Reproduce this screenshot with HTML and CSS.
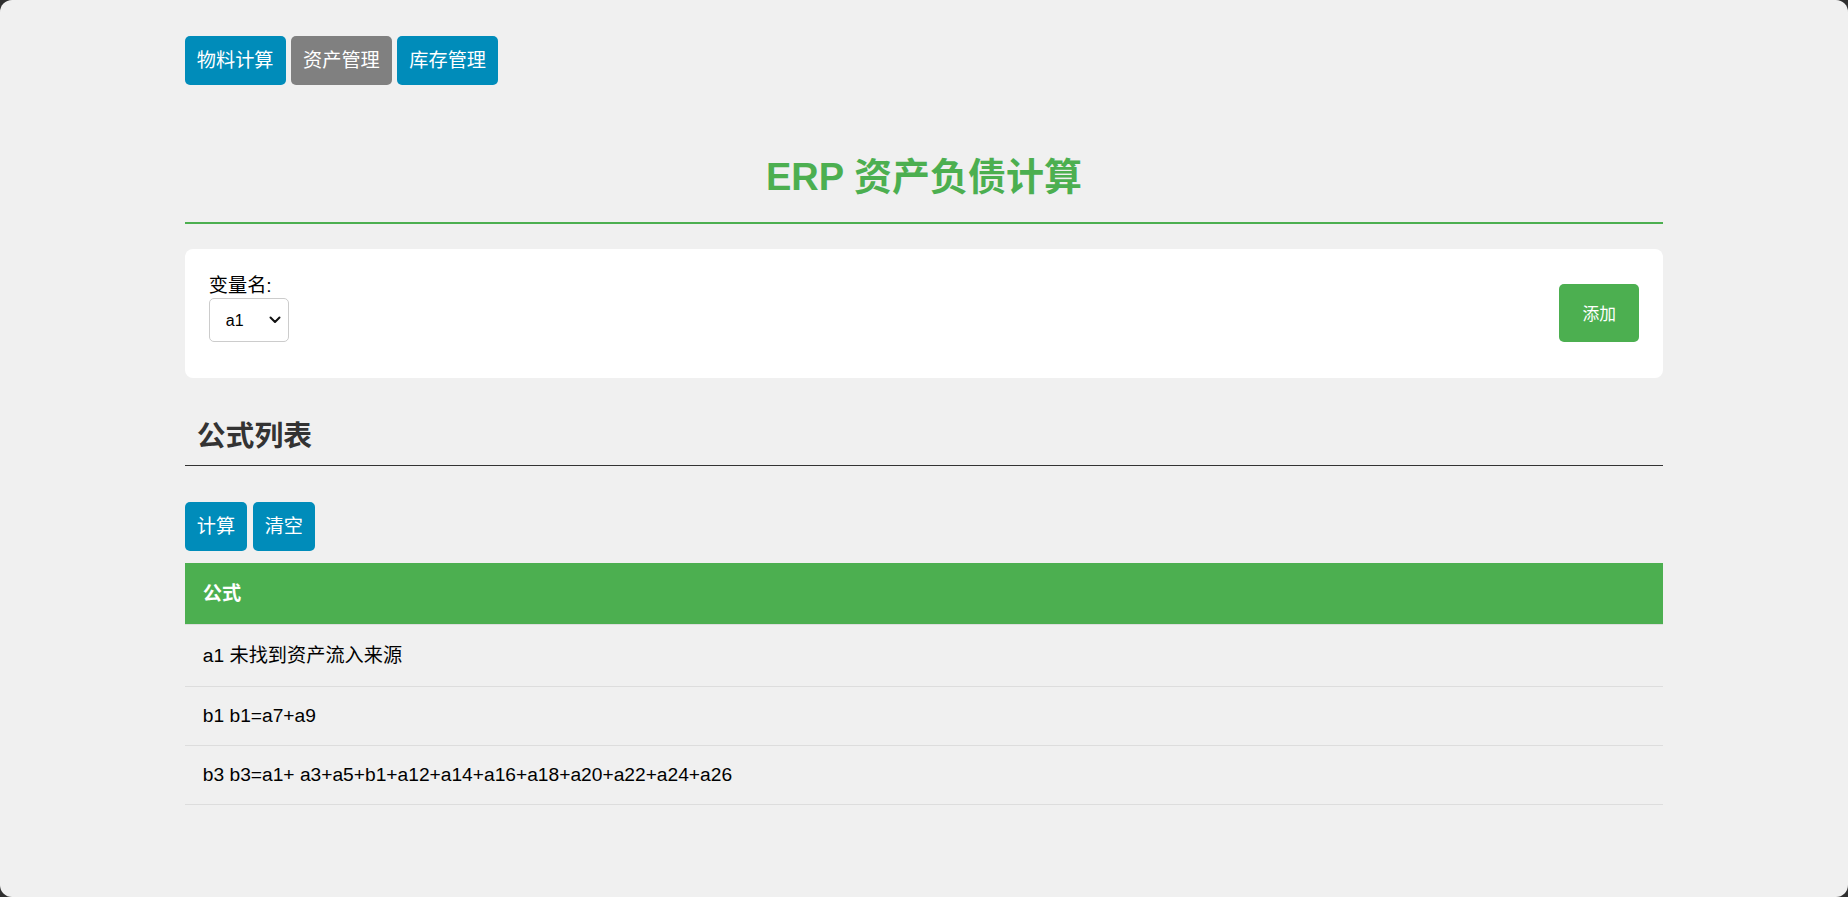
FILE: index.html
```html
<!DOCTYPE html>
<html lang="zh-CN">
<head>
<meta charset="UTF-8">
<title>ERP 资产负债计算</title>
<link rel="stylesheet" href="styles.css">
</head>
<body>
<div class="window">
  <div class="container">
    <nav class="nav">
      <button class="btn btn-blue" type="button">物料计算</button>
      <button class="btn btn-gray" type="button">资产管理</button>
      <button class="btn btn-blue" type="button">库存管理</button>
    </nav>

    <h1 class="title">ERP 资产负债计算</h1>

    <section class="card">
      <div class="field">
        <label class="field-label" for="var-name">变量名:</label>
        <div class="select-wrap">
          <select class="field-select" id="var-name">
            <option>a1</option>
            <option>a3</option>
            <option>a5</option>
            <option>b1</option>
          </select>
          <svg class="select-arrow" viewBox="0 0 12 8" width="12" height="8" aria-hidden="true">
            <path d="M1.5 1.5 L6 6 L10.5 1.5" fill="none" stroke="#111" stroke-width="2" stroke-linecap="round" stroke-linejoin="round"/>
          </svg>
        </div>
      </div>
      <button class="btn-add" type="button">添加</button>
    </section>

    <h2 class="section-title">公式列表</h2>

    <div class="actions">
      <button class="btn btn-blue" type="button">计算</button>
      <button class="btn btn-blue" type="button">清空</button>
    </div>

    <table class="formula-table">
      <thead>
        <tr><th>公式</th></tr>
      </thead>
      <tbody>
        <tr><td class="cjk-cell">a1 未找到资产流入来源</td></tr>
        <tr><td>b1 b1=a7+a9</td></tr>
        <tr><td>b3 b3=a1+ a3+a5+b1+a12+a14+a16+a18+a20+a22+a24+a26</td></tr>
      </tbody>
    </table>
  </div>
</div>
</body>
</html>
```

FILE: styles.css
```css
html {
  background: #2f2f2f;
}

body {
  margin: 0;
  font-family: "Liberation Sans", Arial, "Noto Sans CJK SC", sans-serif;
  font-size: 19.2px;
  color: #000;
}

.window {
  min-height: 897px;
  box-sizing: border-box;
  background: #f0f0f0;
  border-radius: 12px;
  padding-top: 36px;
}

.container {
  width: 80%;
  margin: 0 auto;
}

/* buttons */
.btn {
  font-family: "Liberation Sans", Arial, "Noto Sans CJK SC", sans-serif;
  font-size: 19.2px;
  line-height: 25px;
  padding: 12px;
  border: none;
  border-radius: 5px;
  color: #fff;
  cursor: pointer;
}

.btn-blue {
  background: #008cba;
}

.btn-gray {
  background: #808080;
}

.nav {
  display: flex;
  gap: 5.5px;
}

.title {
  margin: 70px 0 25px;
  padding-bottom: 23px;
  border-bottom: 2px solid #4caf50;
  font-size: 38px;
  line-height: 44px;
  font-weight: bold;
  color: #4caf50;
  text-align: center;
}

/* variable form */
.card {
  display: flex;
  justify-content: space-between;
  align-items: flex-end;
  background: #fff;
  border-radius: 8px;
  padding: 24px 24px 36px;
}

.field {
  display: flex;
  flex-direction: column;
  align-items: flex-start;
}

.field-label {
  line-height: 25px;
}

.select-wrap {
  position: relative;
  width: 80px;
  height: 44px;
}

.field-select {
  appearance: none;
  -webkit-appearance: none;
  width: 80px;
  height: 44px;
  box-sizing: border-box;
  padding: 0 24px 0 16px;
  border: 1px solid #ccc;
  border-radius: 5px;
  background: #fff;
  font-family: "Liberation Sans", Arial, sans-serif;
  font-size: 16px;
  color: #000;
}

.select-arrow {
  position: absolute;
  right: 8px;
  top: 18px;
  pointer-events: none;
}

.btn-add {
  width: 80px;
  height: 58px;
  border: none;
  border-radius: 5px;
  background: #4caf50;
  color: #fff;
  font-family: "Liberation Sans", Arial, "Noto Sans CJK SC", sans-serif;
  font-size: 16.8px;
  cursor: pointer;
}

/* formula list */
.section-title {
  margin: 30px 0 0;
  padding: 10px 12px 11px;
  border-bottom: 1px solid #333;
  font-size: 28.8px;
  line-height: 36px;
  font-weight: bold;
  color: #333;
}

.actions {
  display: flex;
  gap: 5.5px;
  margin-top: 36px;
}

.formula-table {
  width: 100%;
  margin-top: 12px;
  border-collapse: collapse;
}

.formula-table th {
  background: #4caf50;
  color: #fff;
  text-align: left;
  font-weight: bold;
  padding: 18px;
  line-height: 25px;
  border-bottom: 1px solid #ddd;
}

.formula-table td {
  padding: 18px;
  line-height: 22px;
  border-bottom: 1px solid #ddd;
}

.formula-table td.cjk-cell {
  line-height: 25px;
}
```
